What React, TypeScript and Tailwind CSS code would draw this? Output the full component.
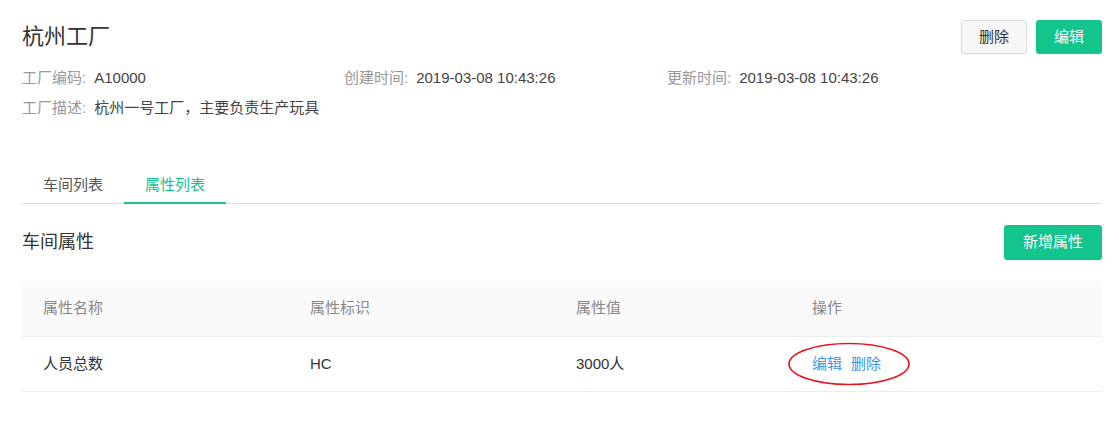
const font = { fontFamily: '"Liberation Sans", "Noto Sans CJK SC", sans-serif' }

const InfoItem = ({ label, value }: { label: string; value: string }) => (
	<div className="whitespace-nowrap">
		<span className="text-[#999]">{label}:</span>
		<span className="ml-[8px] text-[#444]">{value}</span>
	</div>
)

const App = () => {
	const tabs = ["车间列表", "属性列表"]
	const active = 1

	return (
		<div className="w-full min-h-screen bg-white pl-[22px] pr-[17px] pt-[20px] text-[15px] text-[#333]" style={font}>
			{/* Title + actions */}
			<div className="flex items-center justify-between h-[34px]">
				<h1 className="text-[22px] leading-[34px] text-[#333]">杭州工厂</h1>
				<div className="flex items-center gap-[9px]">
					<button className="h-[34px] px-[17px] rounded-[3px] border border-[#d9d9d9] bg-[#f7f7f7] text-[#333] text-[15px]">删除</button>
					<button className="h-[34px] px-[18px] rounded-[3px] bg-[#13c48c] text-white text-[15px]">编辑</button>
				</div>
			</div>

			{/* Info */}
			<div className="mt-[9px] grid grid-cols-[322px_323px_1fr] leading-[30px]">
				<InfoItem label="工厂编码" value="A10000" />
				<InfoItem label="创建时间" value="2019-03-08 10:43:26" />
				<InfoItem label="更新时间" value="2019-03-08 10:43:26" />
				<div className="col-span-3">
					<InfoItem label="工厂描述" value="杭州一号工厂，主要负责生产玩具" />
				</div>
			</div>

			{/* Tabs */}
			<div className="mt-[42px] flex border-b border-[#dcdfe6]">
				{tabs.map((t, i) => (
					<div
						key={t}
						className={
							i === active
								? "-mb-px h-[39px] pt-[3px] px-[21px] flex items-center border-b-2 border-[#13c48c] text-[#13c48c]"
								: "-mb-px h-[39px] pt-[3px] px-[21px] flex items-center border-b-2 border-transparent text-[#555]"
						}
					>
						{t}
					</div>
				))}
			</div>

			{/* Section header */}
			<div className="mt-[21px] flex items-center justify-between h-[35px]">
				<h2 className="text-[18px] text-[#333]">车间属性</h2>
				<button className="h-[35px] px-[19px] rounded-[3px] bg-[#13c48c] text-white text-[15px]">新增属性</button>
			</div>

			{/* Table */}
			<div className="mt-[21px]">
				<div className="grid grid-cols-[267px_266px_236px_1fr] pl-[21px] h-[56px] items-center bg-[#fafafa] border-b border-[#eee] text-[#888]">
					<div>属性名称</div>
					<div>属性标识</div>
					<div>属性值</div>
					<div>操作</div>
				</div>
				<div className="grid grid-cols-[267px_266px_236px_1fr] pl-[21px] h-[55px] items-center border-b border-[#eee] text-[#333]">
					<div>人员总数</div>
					<div>HC</div>
					<div>3000人</div>
					<div className="relative">
						<span className="text-[#3c95e6]">编辑</span>
						<span className="ml-[9px] text-[#3c95e6]">删除</span>
						<svg className="absolute left-[-25px] top-[-11px] pointer-events-none" width="124" height="44" viewBox="0 0 124 44">
							<ellipse cx="62" cy="22" rx="60" ry="20.5" fill="none" stroke="#e8131b" strokeWidth="1.6" />
						</svg>
					</div>
				</div>
			</div>
		</div>
	)
}

export default App
